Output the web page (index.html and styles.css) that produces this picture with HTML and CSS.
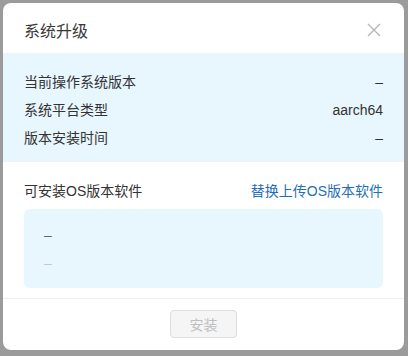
FILE: index.html
```html
<!DOCTYPE html>
<html lang="zh-CN">
<head>
    <meta charset="UTF-8">
    <title>系统升级</title>
    <link rel="stylesheet" href="styles.css">
</head>
<body>
    <div class="dialog">
        <!-- En-tête -->
        <div class="dialog-header">
            <span class="dialog-title">系统升级</span>
            <svg class="close-btn" width="14" height="14" viewBox="0 0 14 14">
                <path d="M1 1 L13 13 M13 1 L1 13" stroke="#b5b5b5" stroke-width="1.3" fill="none"/>
            </svg>
        </div>

        <!-- Informations -->
        <div class="info">
            <div class="info-row"><span>当前操作系统版本</span><span>–</span></div>
            <div class="info-row"><span>系统平台类型</span><span>aarch64</span></div>
            <div class="info-row"><span>版本安装时间</span><span>–</span></div>
        </div>

        <div class="software">
            <div class="software-head">
                <span>可安装OS版本软件</span>
                <a class="link" href="#">替换上传OS版本软件</a>
            </div>
            <div class="software-box">
                <div class="dash">–</div>
                <div class="dash light">–</div>
            </div>
        </div>

        <div class="dialog-footer">
            <button class="install-btn" disabled>安装</button>
        </div>
    </div>
</body>
</html>
```

FILE: styles.css
```css
body {
    margin: 0;
    padding: 3px;
    background-color: #9b9b9b;
    font-family: "Liberation Sans", "Noto Sans CJK SC", sans-serif;
    color: #333;
}

.dialog {
    width: 401px;
    height: 347px;
    background-color: white;
    border-radius: 8px;
    overflow: hidden;
    display: flex;
    flex-direction: column;
}

.dialog-header {
    height: 50px;
    padding: 3px 21px 0 21px;
    display: flex;
    align-items: center;
    justify-content: space-between;
    box-sizing: border-box;
}

.dialog-title {
    font-size: 16px;
    color: #383838;
}

.close-btn {
    margin-right: 2px;
}

.info {
    background-color: #e8f6fe;
    padding: 15px 21px 11px 21px;
    border-bottom: 1px solid #eef2f5;
    height: 109px;
    box-sizing: border-box;
}

.info-row {
    display: flex;
    justify-content: space-between;
    font-size: 14px;
    line-height: 28px;
}

.software {
    padding: 15px 21px 0 21px;
}

.software-head {
    display: flex;
    justify-content: space-between;
    font-size: 14px;
    line-height: 28px;
}

.link {
    color: #1f6fb5;
    text-decoration: none;
}

.software-box {
    margin-top: 4px;
    height: 79px;
    background-color: #e8f6fe;
    border-radius: 6px;
    padding: 12px 20px 0 20px;
    box-sizing: border-box;
}

.dash {
    font-size: 14px;
    line-height: 28px;
    color: #666;
}

.dash.light {
    color: #c8c8c8;
}

.dialog-footer {
    margin-top: 10px;
    border-top: 1px solid #f0f0f0;
    display: flex;
    justify-content: center;
    padding-top: 11px;
}

.install-btn {
    width: 67px;
    height: 28px;
    font-family: "Liberation Sans", "Noto Sans CJK SC", sans-serif;
    font-size: 14px;
    color: #c0c0c0;
    background-color: #f5f5f5;
    border: 1px solid #ddd;
    border-radius: 4px;
}
```
